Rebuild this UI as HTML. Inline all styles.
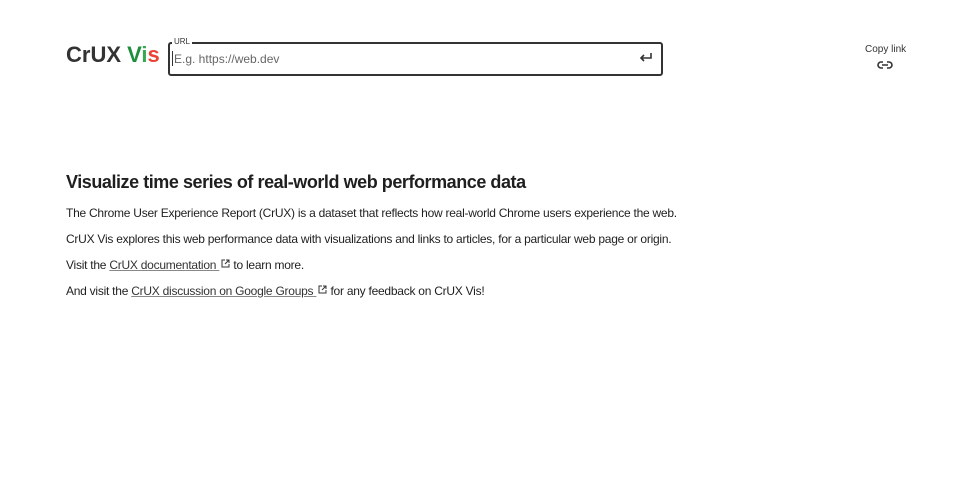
<!DOCTYPE html>
<html><head><meta charset="utf-8"><style>
body{margin:0;width:980px;height:485px;background:#fff;font-family:"Liberation Sans",Arial,sans-serif;color:#1f1f1f;position:relative;overflow:hidden}
.logo{position:absolute;left:66px;top:42px;font-size:22px;font-weight:bold;color:#333;letter-spacing:0px}
.box{position:absolute;left:168px;top:42px;width:491px;height:30px;border:2px solid #333;border-radius:3px}
.lbl{position:absolute;left:172px;top:37px;font-size:8px;background:#fff;padding:0 2px;color:#333}
.ph{position:absolute;left:174px;top:52px;font-size:12px;color:#666}
.cur{position:absolute;left:172px;top:51px;width:1px;height:15px;background:#333}
.ret{position:absolute;left:638px;top:51px}
.copy{position:absolute;left:865px;top:44px;font-size:10px;color:#333}
.link{position:absolute;left:877px;top:60px}
h1{position:absolute;left:66px;top:172px;margin:0;font-size:18px;font-weight:bold;letter-spacing:-0.45px}
p{position:absolute;left:66px;margin:0;font-size:12px;letter-spacing:-0.25px;white-space:nowrap}
a{color:#333;text-decoration:underline;text-decoration-color:#888}
.ext{display:inline-block;vertical-align:1px;margin-left:2px}
</style></head><body>
<div class="logo">CrUX <span style="color:#1e8e3e">V</span><span style="color:#34a853">i</span><span style="color:#ea4335">s</span></div>
<div class="box"></div>
<div class="lbl">URL</div>
<div class="cur"></div>
<div class="ph">E.g. https://web.dev</div>
<svg class="ret" width="16" height="14" viewBox="0 0 16 14"><path d="M13 2v5H3M6 4L3 7l3 3" fill="none" stroke="#333" stroke-width="1.6"/></svg>
<div class="copy">Copy link</div>
<svg class="link" width="16" height="10" viewBox="0 0 16 10"><path d="M6 2H4a3 3 0 0 0 0 6h2M10 2h2a3 3 0 0 1 0 6h-2M5 5h6" fill="none" stroke="#333" stroke-width="1.6"/></svg>
<h1>Visualize time series of real-world web performance data</h1>
<p style="top:206px">The Chrome User Experience Report (CrUX) is a dataset that reflects how real-world Chrome users experience the web.</p>
<p style="top:232px">CrUX Vis explores this web performance data with visualizations and links to articles, for a particular web page or origin.</p>
<p style="top:258px">Visit the <a>CrUX documentation </a><svg class="ext" width="9" height="9" viewBox="0 0 9 9"><path d="M4 1H1v7h7V5M5 1h3v3M8 1L4 5" fill="none" stroke="#333" stroke-width="1"/></svg> to learn more.</p>
<p style="top:284px">And visit the <a>CrUX discussion on Google Groups </a><svg class="ext" width="9" height="9" viewBox="0 0 9 9"><path d="M4 1H1v7h7V5M5 1h3v3M8 1L4 5" fill="none" stroke="#333" stroke-width="1"/></svg> for any feedback on CrUX Vis!</p>
</body></html>
